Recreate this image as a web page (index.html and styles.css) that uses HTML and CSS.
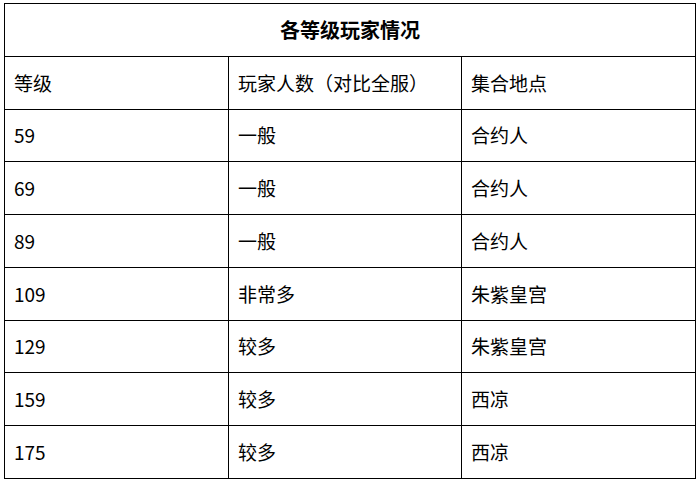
FILE: index.html
```html
<!DOCTYPE html>
<html lang="zh">
<head>
<meta charset="utf-8">
<link rel="stylesheet" href="styles.css">
</head>
<body>
<table class="grid">
  <colgroup>
    <col class="c1"><col class="c2"><col class="c3">
  </colgroup>
  <tr><th colspan="3" class="title">各等级玩家情况</th></tr>
  <tr><td>等级</td><td>玩家人数（对比全服）</td><td>集合地点</td></tr>
  <tr><td>59</td><td>一般</td><td>合约人</td></tr>
  <tr><td>69</td><td>一般</td><td>合约人</td></tr>
  <tr><td>89</td><td>一般</td><td>合约人</td></tr>
  <tr><td>109</td><td>非常多</td><td>朱紫皇宫</td></tr>
  <tr><td>129</td><td>较多</td><td>朱紫皇宫</td></tr>
  <tr><td>159</td><td>较多</td><td>西凉</td></tr>
  <tr><td>175</td><td>较多</td><td>西凉</td></tr>
</table>
</body>
</html>
```
FILE: styles.css
```css
html, body {
  margin: 0;
  background: #fff;
}
body {
  padding: 3px 0 0 4px;
  font-family: "Noto Sans CJK SC", "Noto Sans", sans-serif;
  color: #000;
}
.grid {
  border-collapse: collapse;
  width: 691px;
  table-layout: fixed;
}
.c1 { width: 224px; }
.c2 { width: 233px; }
.c3 { width: 234px; }
.grid th, .grid td {
  border: 1px solid #000;
  height: 51.75px;
  padding: 0 0 0 9px;
  vertical-align: middle;
  text-align: left;
  font-size: 19px;
  line-height: 24px;
  font-weight: normal;
}
.grid th.title {
  text-align: center;
  padding: 0;
  font-size: 20px;
  font-weight: bold;
}
```
